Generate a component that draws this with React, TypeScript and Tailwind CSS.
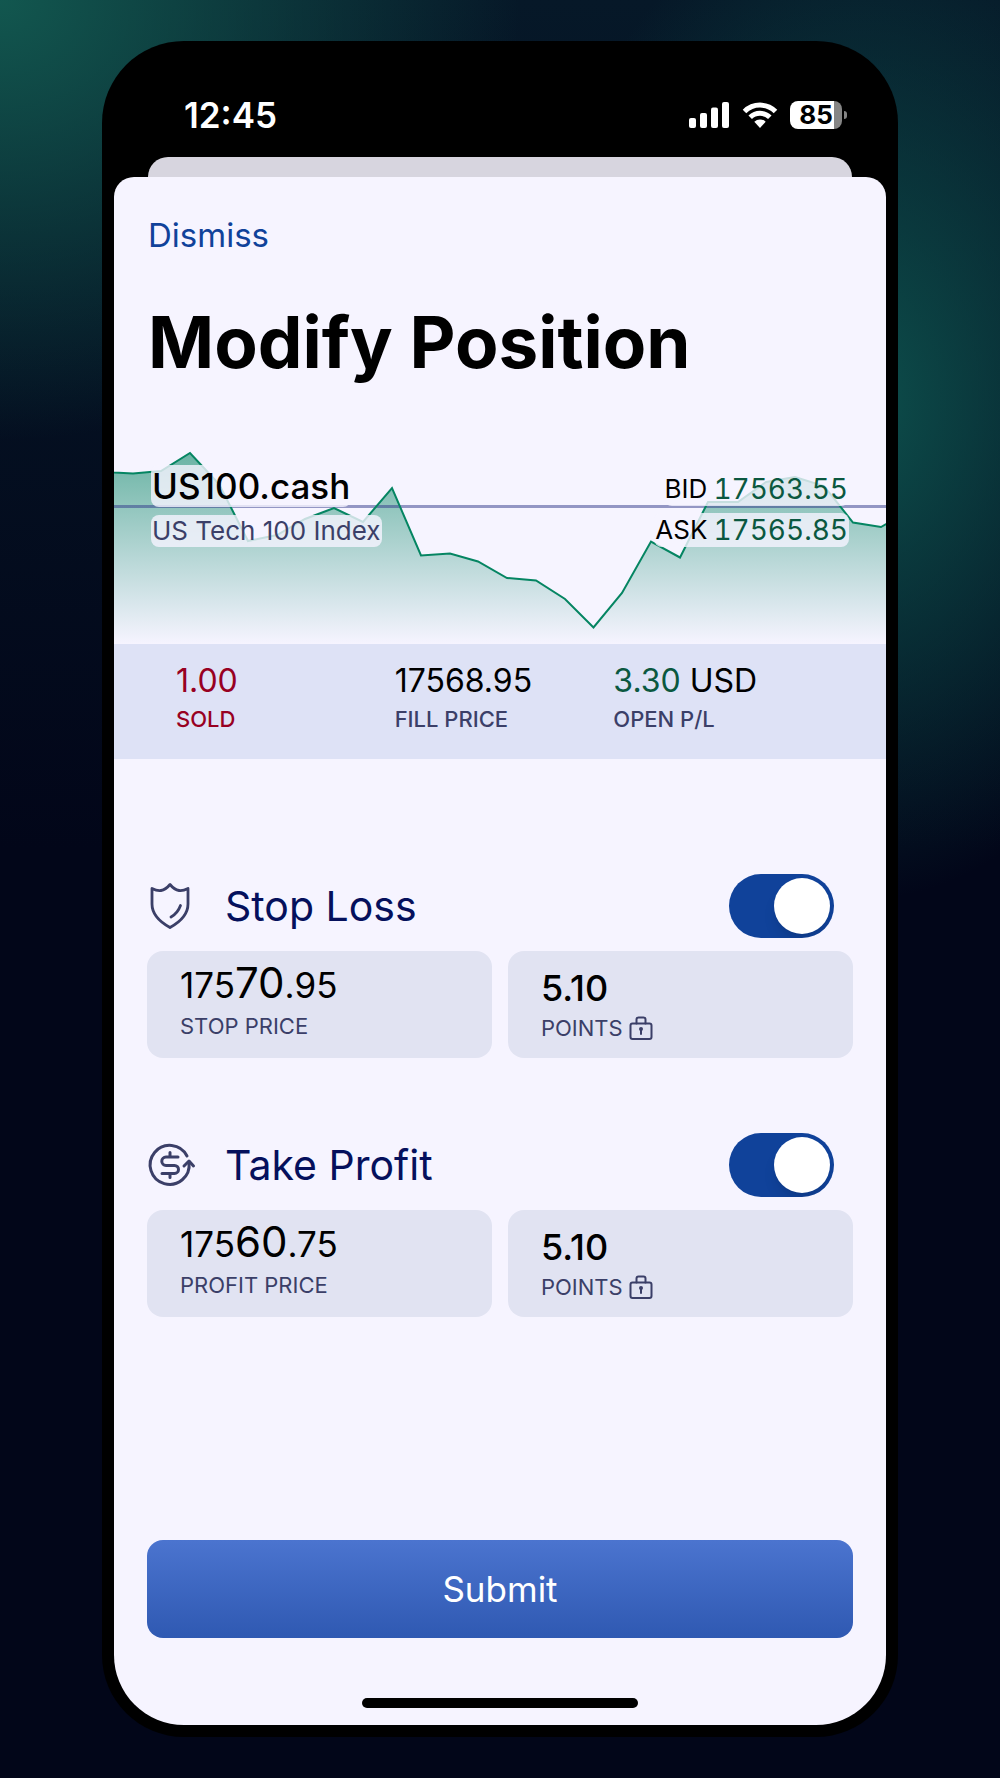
import React, { useState } from 'react';

const CHART_LINE =
  'M-4 32 L0 32.5 L19 33.5 L47 31 L76 13 L105 44 L134 101 L163 95 L191 79 L220 68 L249 82 L278 48 L307 115.5 L336 113.5 L364 121.5 L393 138 L422 140.5 L451 159 L479.5 187.5 L508 153 L537 101.5 L566 117.5 L594 62 L624 62 L652 42 L681 37 L710 46 L739 82.5 L767 87 L776 82';

interface StatProps {
  label: string;
  labelColor: string;
  children: React.ReactNode;
}

const Stat: React.FC<StatProps> = ({ label, labelColor, children }) => (
  <div>
    <p className="text-[32px] leading-[40px]">{children}</p>
    <p className={`text-[22px] leading-[37px] font-medium ${labelColor}`}>{label}</p>
  </div>
);

const ShieldIcon = () => (
  <svg
    className="w-[46px] h-[46px]"
    viewBox="0 0 46 46"
    fill="none"
    stroke="#3b3f68"
    strokeWidth="2.8"
    strokeLinecap="round"
    strokeLinejoin="round"
    aria-hidden="true"
  >
    <path d="M23 1.5 C20.500 4.500 17.500 7 14 7.500 C10.500 8 8 7 5 5.500 V21 C5 32 13 39 23 44.500 C33 39 41 32 41 21 V5.500 C38 7 35.500 8 32 7.500 C28.500 7 25.500 4.500 23 1.500 Z" />
    <path d="M33.500 22.500 C31.500 28 28.500 31.500 24 34" />
  </svg>
);

const ProfitIcon = () => (
  <svg
    className="w-[46px] h-[46px] overflow-visible"
    viewBox="0 0 46 46"
    fill="none"
    stroke="#3b3f68"
    strokeWidth="3"
    strokeLinecap="round"
    strokeLinejoin="round"
    aria-hidden="true"
  >
    <path d="M40 14 A19.500 19.500 0 1 0 42 20.500" />
    <path d="M37 24 L42 19 L46.500 24" />
    <path d="M31 15 H19 a4.200 4.200 0 0 0 0 8.400 H27.500 a4 4 0 0 1 0 8 H15 M23 10.500 V15 M23 31.500 V35.500" />
  </svg>
);

const LockIcon = () => (
  <svg
    className="w-6 h-6"
    viewBox="0 0 24 24"
    fill="none"
    stroke="#3b3f68"
    strokeWidth="2"
    strokeLinecap="round"
    strokeLinejoin="round"
    aria-hidden="true"
  >
    <rect x="1.500" y="7.500" width="21" height="15.500" rx="2" />
    <path d="M7.500 7.500 V3.500 a2 2 0 0 1 2-2 h5 a2 2 0 0 1 2 2 V7.500" />
    <circle cx="12" cy="13" r="2" fill="#3b3f68" stroke="none" />
    <path d="M12 13 V18" />
  </svg>
);

interface OrderSectionProps {
  id: string;
  title: string;
  icon: React.ReactNode;
  price: [string, string, string];
  priceLabel: string;
}

const OrderSection: React.FC<OrderSectionProps> = ({ id, title, icon, price, priceLabel }) => {
  const [enabled, setEnabled] = useState(true);
  const [points, setPoints] = useState('5.10');

  return (
    <section>
      <div className="flex items-center h-16 pr-[19px]">
        {icon}
        <label htmlFor={`${id}-switch`} className="ml-8 flex-1 text-[41px] leading-[48px] text-[#05105c]">
          {title}
        </label>
        <input
          id={`${id}-switch`}
          type="checkbox"
          role="switch"
          checked={enabled}
          onChange={(e) => setEnabled(e.target.checked)}
          className="appearance-none overflow-hidden w-[105px] h-16 p-1 rounded-full bg-gray-300 checked:bg-[#10429a] before:block before:size-14 before:rounded-full before:bg-white before:shadow-lg checked:before:ml-auto"
        />
      </div>

      <div className="mt-[13px] grid grid-cols-2 gap-4">
        <button type="button" className="h-[107px] px-[33px] rounded-2xl bg-[#e1e3f2] text-left">
          <span className="block text-[35px] leading-[40px]">
            {price[0]}
            <span className="text-[42px]">{price[1]}</span>
            {price[2]}
          </span>
          <span className="block text-[22px] leading-[42px] text-[#3b3f68]">{priceLabel}</span>
        </button>
        <div className="flex flex-col justify-center h-[107px] px-[33px] pt-1.5 rounded-2xl bg-[#e1e3f2]">
          <input
            id={`${id}-points`}
            value={points}
            onChange={(e) => setPoints(e.target.value)}
            inputMode="decimal"
            className="w-full h-10 bg-transparent text-[36px] leading-[40px] font-medium outline-none"
          />
          <label
            htmlFor={`${id}-points`}
            className="flex items-center gap-1.5 text-[22px] leading-[40px] text-[#3b3f68]"
          >
            POINTS
            <LockIcon />
          </label>
        </div>
      </div>
    </section>
  );
};

const StatusBar = () => (
  <div className="flex items-center justify-between h-[116px] pt-8 pl-[70px] pr-[39px] text-white">
    <span className="text-[35px] leading-[40px] font-semibold">12:45</span>
    <div className="flex items-center gap-3">
      <svg className="w-[42px] h-7" viewBox="0 0 42 28" fill="#fff" aria-hidden="true">
        <rect x="1" y="17" width="7" height="10" rx="2" />
        <rect x="12" y="12" width="7" height="15" rx="2" />
        <rect x="23" y="6.500" width="7" height="20.500" rx="2" />
        <rect x="34" y="1" width="7" height="26" rx="2" />
      </svg>
      <svg className="w-9 h-7" viewBox="0 0 36 28" aria-hidden="true">
        <g fill="none" stroke="#fff" strokeWidth="5">
          <path d="M2.500 10.500 A22 22 0 0 1 33.500 10.500" />
          <path d="M8.200 16.300 A14 14 0 0 1 27.800 16.300" />
        </g>
        <path d="M12.300 20.700 A8.200 8.200 0 0 1 23.700 20.700 L18 27 Z" fill="#fff" />
      </svg>
      <div className="flex items-center gap-0.5">
        <div className="flex items-center justify-center w-[52px] h-7 rounded-lg bg-linear-to-r from-white from-85% to-[#858585] to-85% text-[26px] leading-7 font-bold text-black">
          85
        </div>
        <div className="w-[3px] h-2 rounded-r-full bg-[#858585]" />
      </div>
    </div>
  </div>
);

const PriceChart = () => (
  <div className="relative h-[204px]">
    <svg className="absolute inset-0 w-full h-full" viewBox="0 0 772 204" preserveAspectRatio="none" aria-hidden="true">
      <defs>
        <linearGradient id="chart-fill" x1="0" y1="0" x2="0" y2="1">
          <stop offset="0" stopColor="#058562" stopOpacity="0.58" />
          <stop offset="1" stopColor="#058562" stopOpacity="0" />
        </linearGradient>
      </defs>
      <path d={`${CHART_LINE} V204 H-4 Z`} fill="url(#chart-fill)" />
      <path d="M0 66.500 H772" stroke="#30388a" strokeOpacity="0.5" strokeWidth="2.800" />
      <path d={CHART_LINE} fill="none" stroke="#058562" strokeWidth="2" />
    </svg>
    <div className="relative flex justify-between px-[37px] pt-[25px]">
      <div className="flex flex-col items-start gap-2">
        <h2 className="px-px rounded-lg bg-[#f6f4ff]/80 text-[35px] leading-[42px] font-medium">US100.cash</h2>
        <p className="px-px rounded-lg bg-[#f6f4ff]/80 text-[26px] leading-8 text-[#3b3f68]">US Tech 100 Index</p>
      </div>
      <dl className="flex flex-col items-end gap-[7px] pt-[7px] text-[26px] leading-[34px]">
        <div className="flex gap-1.5 px-px rounded-lg bg-[#f6f4ff]/80">
          <dt>BID</dt>
          <dd className="text-[28px] tabular-nums text-[#0b5840]">17563.55</dd>
        </div>
        <div className="flex gap-1.5 px-px rounded-lg bg-[#f6f4ff]/80">
          <dt>ASK</dt>
          <dd className="text-[28px] tabular-nums text-[#0b5840]">17565.85</dd>
        </div>
      </dl>
    </div>
  </div>
);

const App: React.FC = () => {
  return (
    <div className="flex flex-col items-center min-h-screen px-4 py-[41px] bg-[#020619] bg-[radial-gradient(520px_440px_at_0px_0px,#12574f,transparent),radial-gradient(340px_500px_at_860px_400px,#0d4f4c,transparent),linear-gradient(#061828,#020619_850px)] font-['Inter',sans-serif] text-black">
      <main className="flex flex-col flex-1 w-full max-w-[796px] px-3 pb-3 rounded-[82px] bg-black">
        <StatusBar />

        {/* Edge of the screen behind the sheet */}
        <div className="h-5 mx-[34px] rounded-t-[20px] bg-[#d7d5df]" />

        <div className="flex flex-col flex-1 rounded-t-[20px] rounded-b-[70px] bg-[#f6f4ff]">
          <header className="px-[34px] pt-[38px]">
            <button type="button" className="block text-[33px] leading-[40px] text-[#10429a]">
              Dismiss
            </button>
            <h1 className="mt-[45px] text-[71px] leading-[84px] font-bold">Modify Position</h1>
          </header>

          <div className="mt-14">
            <PriceChart />
          </div>

          {/* Open position */}
          <div className="grid grid-cols-3 h-[115px] pl-[62px] pr-[54px] pt-[17px] bg-[#dee2f6]">
            <Stat label="SOLD" labelColor="text-[#980022]">
              <span className="text-[#980022]">1.00</span>
            </Stat>
            <Stat label="FILL PRICE" labelColor="text-[#3b3f68]">
              17568.95
            </Stat>
            <Stat label="OPEN P/L" labelColor="text-[#3b3f68]">
              <span className="text-[#0b5840]">3.30</span> USD
            </Stat>
          </div>

          <form className="flex flex-col flex-1 px-[33px] pt-[115px]" onSubmit={(e) => e.preventDefault()}>
            <div className="space-y-[75px]">
              <OrderSection
                id="stop-loss"
                title="Stop Loss"
                icon={<ShieldIcon />}
                price={['175', '70', '.95']}
                priceLabel="STOP PRICE"
              />
              <OrderSection
                id="take-profit"
                title="Take Profit"
                icon={<ProfitIcon />}
                price={['175', '60', '.75']}
                priceLabel="PROFIT PRICE"
              />
            </div>
            <button
              type="submit"
              className="mt-auto w-full h-[98px] rounded-2xl bg-linear-to-b from-[#4b74cf] to-[#2f59b2] text-[35px] leading-[40px] text-white"
            >
              Submit
            </button>
          </form>

          <div className="mt-[60px] mb-[17px] mx-auto w-[276px] h-2.5 rounded-full bg-black" />
        </div>
      </main>
    </div>
  );
};

export default App;
